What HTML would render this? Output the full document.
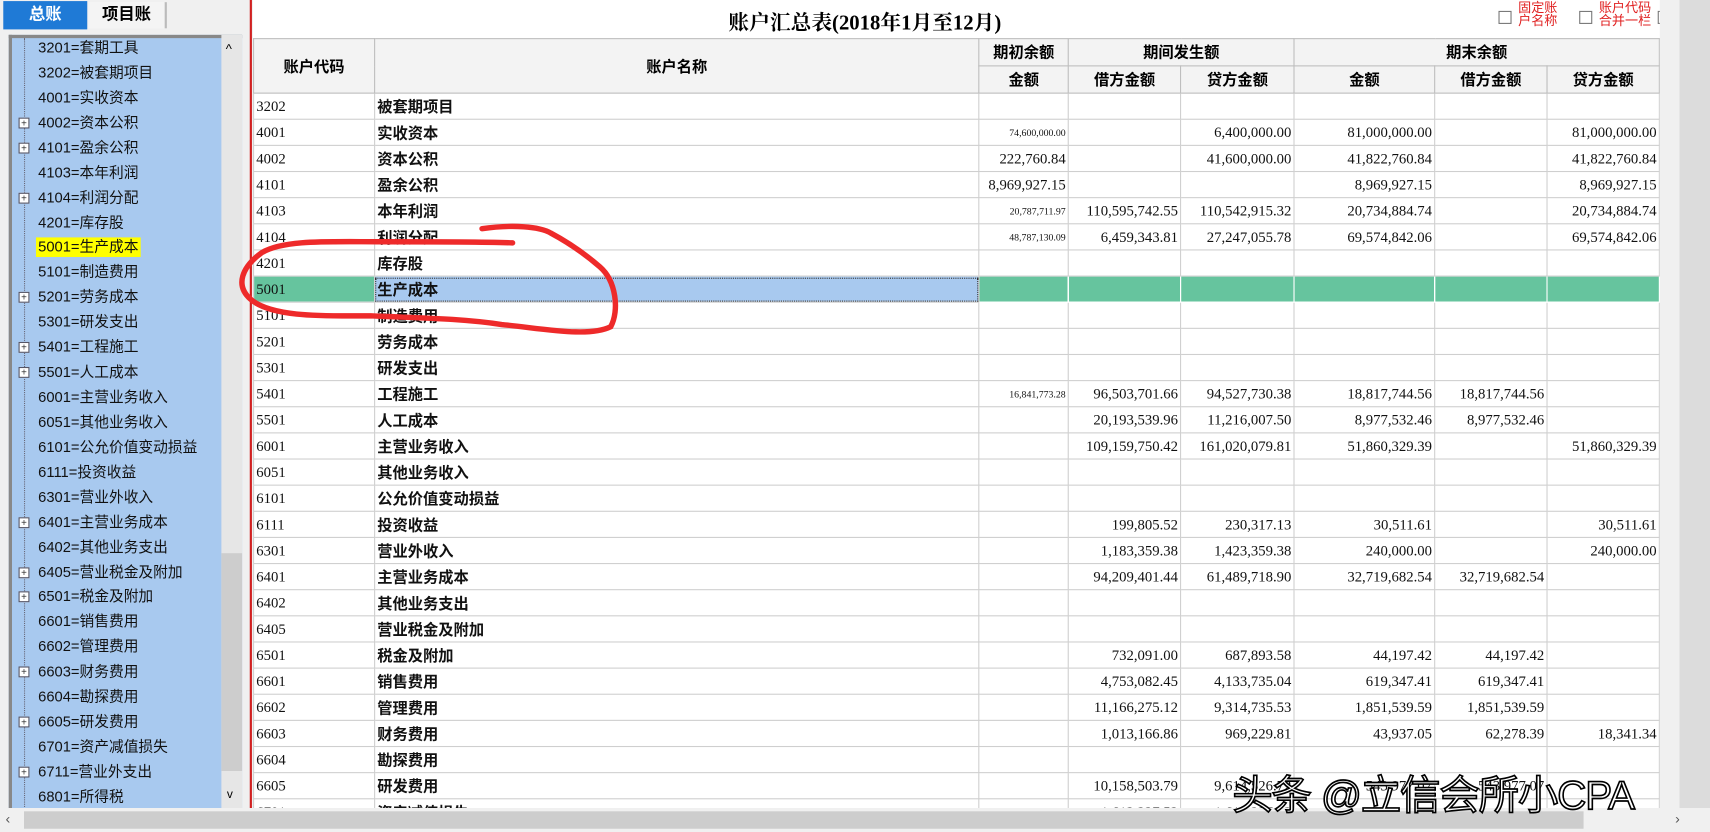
<!DOCTYPE html>
<html><head><meta charset="utf-8"><style>
html,body{margin:0;padding:0;width:1710px;height:832px;overflow:hidden;background:#f0f0f0}
#w{position:absolute;left:0;top:0;width:1568px;height:764px;transform:scale(1.0906,1.089);transform-origin:0 0;background:#f0f0f0;font-family:"Liberation Sans","Noto Sans CJK SC",sans-serif}
.abs{position:absolute}
.tab1{left:3px;top:1px;width:77px;height:26px;background:#1f7ad6;color:#fff;font-weight:bold;font-size:15px;text-align:center;line-height:26px}
.tab2{left:81px;top:2px;width:70px;height:24px;background:#f4f4f4;border-right:2px solid #bbb;font-weight:bold;font-size:15px;text-align:center;line-height:24px}
#tree{left:8px;top:32px;width:214px;height:710px;background:#a8c9ef;border-top:3px solid #888;border-left:3px solid #888;box-sizing:border-box;overflow:hidden}
.ti{position:absolute;left:24px;font-size:13.5px;line-height:18px;color:#111;white-space:nowrap}
.ti.sel{background:#ffff00;padding:0 2px;left:22px}
.pl{position:absolute;left:6px;width:8px;height:8px;border:1px solid #556;background:#fff;font-size:9px;line-height:8px;text-align:center;color:#333}
#vs{left:203px;top:32px;width:19px;height:710px;background:#e6e6e6}
#right{left:232px;top:0;width:1290px;height:742px;background:#fff;overflow:hidden}
table{border-collapse:collapse;table-layout:fixed;position:absolute;left:0;top:35px}
td{border:1px solid #cfcfcf;height:23px;padding:0 2px;font-family:"Liberation Serif","Noto Serif CJK SC",serif;font-size:13.5px;text-align:right;white-space:nowrap;overflow:hidden;color:#111}
td.c{text-align:left;font-size:13.5px}
td.n{text-align:left;font-weight:bold;font-family:"Liberation Sans","Noto Sans CJK SC",sans-serif;font-size:14px}
td.s{font-size:9px}
th{background:#f3f3f3;border:1px solid #bdbdbd;font-weight:bold;font-size:14px;height:22px;font-family:"Liberation Sans","Noto Sans CJK SC",sans-serif}
</style></head><body><div id="w">
<div class="abs tab1">总账</div><div class="abs tab2">项目账</div>
<div class="abs" id="tree">
<div class="abs" style="left:11px;top:0;height:710px;border-left:1px dotted #667"></div>
</div>
<div class="abs" id="vs"><div class="abs" style="left:4px;top:6px;font-size:12px">^</div><div class="abs" style="left:0;top:476px;width:19px;height:200px;background:#cdcdcd"></div><div class="abs" style="left:5px;top:692px;font-size:11px">v</div></div>
<div class="abs" style="left:229px;top:0;width:2px;height:742px;background:#d02020"></div>
<div class="abs" id="right">
<div class="abs" style="left:0;top:6px;width:1290px;text-align:center;font-family:'Liberation Serif','Noto Serif CJK SC',serif;font-size:19px;font-weight:bold"><span style="position:relative;left:-84px">账户汇总表(2018年1月至12月)</span></div>
<div class="abs" style="left:1142px;top:10px;width:10px;height:10px;border:1px solid #777"></div>
<div class="abs" style="left:1160px;top:1px;color:#e02020;font-size:12px;line-height:12px">固定账<br>户名称</div>
<div class="abs" style="left:1216px;top:10px;width:10px;height:10px;border:1px solid #777"></div>
<div class="abs" style="left:1234px;top:1px;color:#e02020;font-size:12px;line-height:12px">账户代码<br>合并一栏</div>
<div class="abs" style="left:1288px;top:10px;width:10px;height:10px;border:1px solid #777"></div>
<table id="t">
<colgroup><col style="width:111px"><col style="width:555px"><col style="width:82px"><col style="width:103px"><col style="width:104px"><col style="width:129px"><col style="width:103px"><col style="width:103px"></colgroup>
<tr><th rowspan="2">账户代码</th><th rowspan="2">账户名称</th><th>期初余额</th><th colspan="2">期间发生额</th><th colspan="3">期末余额</th></tr>
<tr><th>金额</th><th>借方金额</th><th>贷方金额</th><th>金额</th><th>借方金额</th><th>贷方金额</th></tr>
<tr><td class="c">3202</td><td class="n">被套期项目</td><td></td><td></td><td></td><td></td><td></td><td></td></tr>
<tr><td class="c">4001</td><td class="n">实收资本</td><td class="s">74,600,000.00</td><td></td><td>6,400,000.00</td><td>81,000,000.00</td><td></td><td>81,000,000.00</td></tr>
<tr><td class="c">4002</td><td class="n">资本公积</td><td>222,760.84</td><td></td><td>41,600,000.00</td><td>41,822,760.84</td><td></td><td>41,822,760.84</td></tr>
<tr><td class="c">4101</td><td class="n">盈余公积</td><td>8,969,927.15</td><td></td><td></td><td>8,969,927.15</td><td></td><td>8,969,927.15</td></tr>
<tr><td class="c">4103</td><td class="n">本年利润</td><td class="s">20,787,711.97</td><td>110,595,742.55</td><td>110,542,915.32</td><td>20,734,884.74</td><td></td><td>20,734,884.74</td></tr>
<tr><td class="c">4104</td><td class="n">利润分配</td><td class="s">48,787,130.09</td><td>6,459,343.81</td><td>27,247,055.78</td><td>69,574,842.06</td><td></td><td>69,574,842.06</td></tr>
<tr><td class="c">4201</td><td class="n">库存股</td><td></td><td></td><td></td><td></td><td></td><td></td></tr>
<tr><td class="c" style="background:#66c49e">5001</td><td class="n" style="background:#a8c9ef;outline:1px dotted #333;outline-offset:-2px">生产成本</td><td style="background:#66c49e;border-color:#fff"></td><td style="background:#66c49e;border-color:#fff"></td><td style="background:#66c49e;border-color:#fff"></td><td style="background:#66c49e;border-color:#fff"></td><td style="background:#66c49e;border-color:#fff"></td><td style="background:#66c49e;border-color:#fff"></td></tr>
<tr><td class="c">5101</td><td class="n">制造费用</td><td></td><td></td><td></td><td></td><td></td><td></td></tr>
<tr><td class="c">5201</td><td class="n">劳务成本</td><td></td><td></td><td></td><td></td><td></td><td></td></tr>
<tr><td class="c">5301</td><td class="n">研发支出</td><td></td><td></td><td></td><td></td><td></td><td></td></tr>
<tr><td class="c">5401</td><td class="n">工程施工</td><td class="s">16,841,773.28</td><td>96,503,701.66</td><td>94,527,730.38</td><td>18,817,744.56</td><td>18,817,744.56</td><td></td></tr>
<tr><td class="c">5501</td><td class="n">人工成本</td><td></td><td>20,193,539.96</td><td>11,216,007.50</td><td>8,977,532.46</td><td>8,977,532.46</td><td></td></tr>
<tr><td class="c">6001</td><td class="n">主营业务收入</td><td></td><td>109,159,750.42</td><td>161,020,079.81</td><td>51,860,329.39</td><td></td><td>51,860,329.39</td></tr>
<tr><td class="c">6051</td><td class="n">其他业务收入</td><td></td><td></td><td></td><td></td><td></td><td></td></tr>
<tr><td class="c">6101</td><td class="n">公允价值变动损益</td><td></td><td></td><td></td><td></td><td></td><td></td></tr>
<tr><td class="c">6111</td><td class="n">投资收益</td><td></td><td>199,805.52</td><td>230,317.13</td><td>30,511.61</td><td></td><td>30,511.61</td></tr>
<tr><td class="c">6301</td><td class="n">营业外收入</td><td></td><td>1,183,359.38</td><td>1,423,359.38</td><td>240,000.00</td><td></td><td>240,000.00</td></tr>
<tr><td class="c">6401</td><td class="n">主营业务成本</td><td></td><td>94,209,401.44</td><td>61,489,718.90</td><td>32,719,682.54</td><td>32,719,682.54</td><td></td></tr>
<tr><td class="c">6402</td><td class="n">其他业务支出</td><td></td><td></td><td></td><td></td><td></td><td></td></tr>
<tr><td class="c">6405</td><td class="n">营业税金及附加</td><td></td><td></td><td></td><td></td><td></td><td></td></tr>
<tr><td class="c">6501</td><td class="n">税金及附加</td><td></td><td>732,091.00</td><td>687,893.58</td><td>44,197.42</td><td>44,197.42</td><td></td></tr>
<tr><td class="c">6601</td><td class="n">销售费用</td><td></td><td>4,753,082.45</td><td>4,133,735.04</td><td>619,347.41</td><td>619,347.41</td><td></td></tr>
<tr><td class="c">6602</td><td class="n">管理费用</td><td></td><td>11,166,275.12</td><td>9,314,735.53</td><td>1,851,539.59</td><td>1,851,539.59</td><td></td></tr>
<tr><td class="c">6603</td><td class="n">财务费用</td><td></td><td>1,013,166.86</td><td>969,229.81</td><td>43,937.05</td><td>62,278.39</td><td>18,341.34</td></tr>
<tr><td class="c">6604</td><td class="n">勘探费用</td><td></td><td></td><td></td><td></td><td></td><td></td></tr>
<tr><td class="c">6605</td><td class="n">研发费用</td><td></td><td>10,158,503.79</td><td>9,614,526.72</td><td>543,977.07</td><td>543,977.07</td><td></td></tr>
<tr><td class="c">6701</td><td class="n">资产减值损失</td><td></td><td>1,612,227.52</td><td>1,612,227.52</td><td></td><td></td><td></td></tr>
</table>
</div>
<div class="abs" style="left:1522px;top:0;width:46px;height:742px;background:#f0f0f0"></div>
<div class="abs" style="left:1540px;top:0;width:28px;height:742px;background:#dcdcdc"></div>
<div class="abs" style="left:0;top:742px;width:1568px;height:22px;background:#f0f0f0"></div>
<div class="abs" style="left:22px;top:745px;width:1430px;height:16px;background:#cdcdcd"></div>
<div class="abs" style="left:5px;top:744px;font-size:13px;color:#555">&lsaquo;</div>
<div class="abs" style="left:1536px;top:744px;font-size:13px;color:#555">&rsaquo;</div>
<svg class="abs" style="left:0;top:0" width="1568" height="764"><path d="M442 210 C470 206 495 208 505 214 C520 222 535 232 550 245 C565 258 568 285 560 300 C540 310 500 302 460 298 C420 292 380 292 340 290 C300 290 250 292 230 275 C215 262 222 245 240 232 C260 220 300 222 350 222 C400 222 440 222 470 223" fill="none" stroke="#ee2a2a" stroke-width="5" stroke-linecap="round"/></svg>
<div class="abs" style="left:1130px;top:700px;font-size:37px;color:#fff;font-family:'Liberation Sans','Noto Sans CJK SC',sans-serif;-webkit-text-stroke:1.5px #000;white-space:nowrap;letter-spacing:-1px">头条 @立信会所小CPA</div>
</div>
<script>
var items=[["3201=套期工具",0],["3202=被套期项目",0],["4001=实收资本",0],["4002=资本公积",1],["4101=盈余公积",1],["4103=本年利润",0],["4104=利润分配",1],["4201=库存股",0],["5001=生产成本",2],["5101=制造费用",0],["5201=劳务成本",1],["5301=研发支出",0],["5401=工程施工",1],["5501=人工成本",1],["6001=主营业务收入",0],["6051=其他业务收入",0],["6101=公允价值变动损益",0],["6111=投资收益",0],["6301=营业外收入",0],["6401=主营业务成本",1],["6402=其他业务支出",0],["6405=营业税金及附加",1],["6501=税金及附加",1],["6601=销售费用",0],["6602=管理费用",0],["6603=财务费用",1],["6604=勘探费用",0],["6605=研发费用",1],["6701=资产减值损失",0],["6711=营业外支出",1],["6801=所得税",0]];
var t=document.getElementById('tree'),h='';
items.forEach(function(it,i){var y=(44+i*22.93-32-3-9);
h+='<div class="ti'+(it[1]==2?' sel':'')+'" style="top:'+y+'px">'+it[0]+'</div>';
if(it[1]==1)h+='<div class="pl" style="top:'+(y+4)+'px">+</div>';});
t.innerHTML+=h;
</script>
</body></html>
